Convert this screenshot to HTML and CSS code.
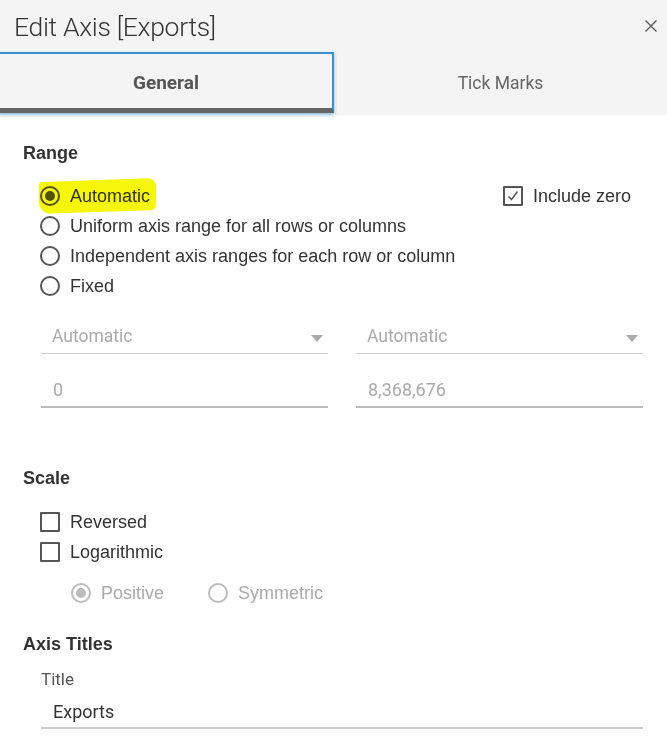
FILE: index.html
```html
<!DOCTYPE html>
<html>
<head>
<meta charset="utf-8">
<link rel="stylesheet" href="styles.css">
</head>
<body>
<div class="dialog">
  <header class="head">
    <div class="titlebar">
      <h1 class="title">Edit Axis [Exports]</h1>
      <span class="close">
        <svg width="14" height="14" viewBox="0 0 14 14"><path d="M1.5 1.5 L12.5 12.5 M12.5 1.5 L1.5 12.5" stroke="#555" stroke-width="1.3" fill="none"/></svg>
      </span>
    </div>
    <div class="tabs">
      <div class="tab active">General</div>
      <div class="tab">Tick Marks</div>
    </div>
  </header>
  <main class="content">
    <section class="range">
      <h2 class="heading">Range</h2>
      <div class="range-top">
        <div class="radios">
          <div class="row hl-row"><span class="radio on"></span><span class="label">Automatic</span><span class="marker"></span></div>
          <div class="row"><span class="radio"></span><span class="label">Uniform axis range for all rows or columns</span></div>
          <div class="row"><span class="radio"></span><span class="label">Independent axis ranges for each row or column</span></div>
          <div class="row"><span class="radio"></span><span class="label">Fixed</span></div>
        </div>
        <div class="row include"><span class="check on">
          <svg width="14" height="14" viewBox="0 0 14 14"><path d="M2.5 7.5 L5.5 10.5 L11.5 2.5" stroke="#555" stroke-width="1.5" fill="none"/></svg>
        </span><span class="label">Include zero</span></div>
      </div>
      <div class="fields">
        <div class="select"><span>Automatic</span><span class="arrow"></span></div>
        <div class="select"><span>Automatic</span><span class="arrow"></span></div>
        <div class="input">0</div>
        <div class="input">8,368,676</div>
      </div>
    </section>
    <section class="scale">
      <h2 class="heading">Scale</h2>
      <div class="checks">
        <div class="row"><span class="check"></span><span class="label">Reversed</span></div>
        <div class="row"><span class="check"></span><span class="label">Logarithmic</span></div>
      </div>
      <div class="subradios">
        <div class="row dis"><span class="radio on"></span><span class="label">Positive</span></div>
        <div class="row dis"><span class="radio"></span><span class="label">Symmetric</span></div>
      </div>
    </section>
    <section class="titles">
      <h2 class="heading">Axis Titles</h2>
      <div class="sublabel">Title</div>
      <div class="titleinput">Exports</div>
    </section>
  </main>
</div>
</body>
</html>
```

FILE: styles.css
```css
* { box-sizing: border-box; }
html, body { margin: 0; padding: 0; background: #fff; }
body {
  font-family: "Liberation Sans", Arial, sans-serif;
  color: #333;
  width: 667px;
  height: 745px;
  overflow: hidden;
}
.head { background: #f4f4f4; height: 115px; }
.titlebar {
  height: 52px;
  display: flex;
  align-items: center;
  justify-content: space-between;
  padding: 0 9px 0 14px;
}
.title {
  margin: 0;
  font-family: Roboto, "Liberation Sans", sans-serif;
  font-weight: 300;
  font-size: 26.5px;
  color: #333;
  letter-spacing: -0.3px;
}
.close { display: flex; width: 14px; height: 14px; }
.tabs { display: flex; height: 61px; }
.tab {
  flex: 1;
  display: flex;
  align-items: center;
  justify-content: center;
  font-family: Roboto, "Liberation Sans", sans-serif;
  font-size: 17.5px;
  color: #666;
}
.tab.active {
  flex: 0 0 336px;
  margin-left: -2px;
  border: 2px solid #3b8fd0;
  border-bottom: 5px solid #666;
  box-shadow: 0 2px 4px rgba(59, 143, 208, 0.55);
  font-weight: 700;
  font-size: 19px;
  color: #555;
  padding-top: 2px;
  position: relative;
  z-index: 1;
}
.content { padding: 0 23px 0 23px; }
.heading {
  margin: 0;
  font-size: 18px;
  font-weight: 700;
  color: #333;
  height: 20px;
  line-height: 20px;
}
.range { padding-top: 28px; }
.range-top { display: flex; justify-content: space-between; margin-top: 18px; }
.radios { display: flex; flex-direction: column; padding-left: 17px; }
.row {
  display: flex;
  align-items: center;
  height: 30px;
  font-size: 18px;
  color: #333;
  position: relative;
}
.label { position: relative; z-index: 1; }
.radio {
  width: 20px;
  height: 20px;
  border: 2px solid #555;
  border-radius: 50%;
  margin-right: 10px;
  display: flex;
  align-items: center;
  justify-content: center;
  flex: none;
  background: #fff;
}
.radio.on::after {
  content: "";
  width: 10px;
  height: 10px;
  border-radius: 50%;
  background: #555;
}
.marker {
  position: absolute;
  left: -1px;
  top: -1px;
  width: 117px;
  height: 32px;
  background: #f6f50c;
  mix-blend-mode: multiply;
  border-radius: 3px 8px 5px 12px;
  transform: skewY(-2deg);
  z-index: 2;
}
.check {
  width: 20px;
  height: 20px;
  border: 2px solid #555;
  border-radius: 1px;
  margin-right: 10px;
  display: flex;
  align-items: center;
  justify-content: center;
  flex: none;
}
.include { margin-right: 13px; align-self: flex-start; }
.fields {
  display: grid;
  grid-template-columns: 287px 287px;
  column-gap: 28px;
  margin-left: 18px;
  margin-top: 17px;
}
.select {
  height: 36px;
  border-bottom: 1px solid #ccc;
  display: flex;
  align-items: center;
  justify-content: space-between;
  padding: 0 5px 0 11px;
  font-family: Roboto, "Liberation Sans", sans-serif;
  font-size: 17.5px;
  color: #aaa;
}
.arrow {
  width: 0; height: 0;
  border-left: 6px solid transparent;
  border-right: 6px solid transparent;
  border-top: 7px solid #aaa;
  margin-top: 5px;
}
.input {
  height: 54px;
  border-bottom: 2px solid #bbb;
  display: flex;
  align-items: center;
  padding: 18px 0 0 12px;
  font-family: Roboto, "Liberation Sans", sans-serif;
  font-size: 18px;
  color: #aaa;
}
.scale { padding-top: 60px; }
.checks { display: flex; flex-direction: column; margin-top: 19px; padding-left: 17px; }
.subradios { display: flex; gap: 44px; padding-left: 48px; margin-top: 11px; }
.row.dis { color: #aaa; }
.row.dis .radio { border-color: #bbb; }
.row.dis .radio.on::after { background: #bbb; }
.titles { padding-top: 26px; }
.sublabel {
  margin-left: 18px;
  margin-top: 15px;
  font-family: Roboto, "Liberation Sans", sans-serif;
  font-size: 17px;
  color: #555;
  height: 20px;
  line-height: 20px;
}
.titleinput {
  margin: 0 0 0 18px;
  width: 602px;
  height: 40px;
  border-bottom: 2px solid #ccc;
  padding: 13px 0 0 12px;
  font-family: Roboto, "Liberation Sans", sans-serif;
  font-size: 18px;
  color: #333;
  line-height: 20px;
}
```
